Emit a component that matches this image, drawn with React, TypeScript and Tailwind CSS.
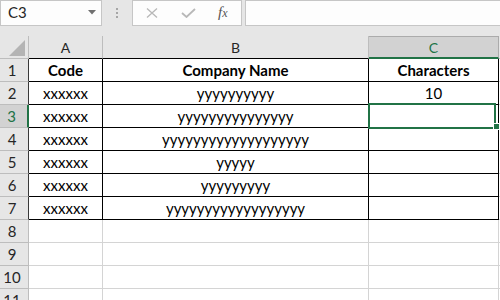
import React from "react";

const GREEN = "#217346";

type Row = { n: number; a?: string; b?: string; c?: string; bold?: boolean };

const rows: Row[] = [
  { n: 1, a: "Code", b: "Company Name", c: "Characters", bold: true },
  { n: 2, a: "xxxxxx", b: "yyyyyyyyyy", c: "10" },
  { n: 3, a: "xxxxxx", b: "yyyyyyyyyyyyyyy", c: "" },
  { n: 4, a: "xxxxxx", b: "yyyyyyyyyyyyyyyyyyy", c: "" },
  { n: 5, a: "xxxxxx", b: "yyyyy", c: "" },
  { n: 6, a: "xxxxxx", b: "yyyyyyyyy", c: "" },
  { n: 7, a: "xxxxxx", b: "yyyyyyyyyyyyyyyyyy", c: "" },
  { n: 8 },
  { n: 9 },
  { n: 10 },
  { n: 11 },
];

function FormulaBar() {
  return (
    <div className="h-[36px] bg-[#e6e6e6] flex items-start text-[#262626]">
      <div className="w-[102px] h-[26px] bg-[#fdfdfd] border border-[#c6c6c6] flex items-center justify-between pl-[7px] pr-[5px]">
        <span className="text-[15px] leading-[18px] pb-[2px]">C3</span>
        <svg width="8" height="5" viewBox="0 0 8 5" className="mb-[1px]">
          <polygon points="0,0 8,0 4,4.5" fill="#707070" />
        </svg>
      </div>
      <div className="w-[30px] h-[26px] flex flex-col items-center justify-center gap-[2px] pb-[1px]">
        <div className="w-[2px] h-[2px] bg-[#a6a6a6]" />
        <div className="w-[2px] h-[2px] bg-[#a6a6a6]" />
        <div className="w-[2px] h-[2px] bg-[#a6a6a6]" />
      </div>
      <div className="w-[110px] h-[26px] bg-[#fdfdfd] border border-[#c6c6c6] flex items-center">
        <svg width="12" height="10" viewBox="0 0 12 10" className="ml-[13px]">
          <path d="M1 0.5 L11 9.5 M11 0.5 L1 9.5" stroke="#b8b8b8" strokeWidth="1.3" fill="none" />
        </svg>
        <svg width="15" height="10" viewBox="0 0 15 10" className="ml-[23px]">
          <path d="M1 5 L5.5 9 L14 1" stroke="#b8b8b8" strokeWidth="1.8" fill="none" />
        </svg>
        <span className="ml-[22px] font-['Liberation_Serif'] italic text-[15px] leading-[18px] text-[#555] pb-[2px]">
          f<span className="text-[12px]">x</span>
        </span>
      </div>
      <div className="w-[3px]" />
      <div className="flex-1 h-[26px] bg-[#fdfdfd] border border-[#c6c6c6] border-r-0" />
    </div>
  );
}

function HeaderRow() {
  return (
    <div className="flex h-[23px] bg-[#e6e6e6] text-[14px] leading-[17px] text-[#262626]">
      <div className="w-[29px] shrink-0 border-r border-b border-[#bdbdbd] flex items-end justify-end pr-[3px] pb-[2px]">
        <svg width="16" height="16" viewBox="0 0 16 16">
          <polygon points="16,0 16,16 0,16" fill="#b4b4b4" />
        </svg>
      </div>
      <div className="w-[74px] shrink-0 border-r border-[#bdbdbd] border-b border-b-black flex items-end justify-center pb-[2px]">
        A
      </div>
      <div className="w-[266px] shrink-0 border-r border-[#bdbdbd] border-b border-b-black flex items-end justify-center pb-[2px]">
        B
      </div>
      <div className="w-[130px] shrink-0 bg-[#d2d2d2] border-t border-r border-[#ababab] border-b-2 border-b-[#217346] flex items-end justify-center pb-[1px] text-[#217346]">
        C
      </div>
      <div className="flex-1 border-b border-[#bdbdbd]" />
    </div>
  );
}

function DataRow({ r }: { r: Row }) {
  const inTable = r.n <= 7;
  const sel = r.n === 3;
  const cellBorder = inTable ? "border-black" : "border-[#d4d4d4]";
  const txt = r.bold ? "font-bold" : "";
  return (
    <div className="flex h-[23px] text-[15px] leading-[18px]">
      <div
        className={
          "w-[29px] shrink-0 border-b border-b-[#bdbdbd] flex items-end justify-center pr-[4px] pb-[2px] " +
          (sel
            ? "bg-[#d2d2d2] border-r-2 border-r-[#217346] text-[#217346]"
            : inTable
            ? "bg-[#e6e6e6] border-r border-r-[#3a3a3a] text-[#262626]"
            : "bg-[#e6e6e6] border-r border-r-[#bdbdbd] text-[#262626]")
        }
      >
        {r.n}
      </div>
      <div className={"w-[74px] shrink-0 border-r border-b bg-white text-black flex items-end justify-center pb-[2px] " + cellBorder + " " + txt}>
        {r.a}
      </div>
      <div className={"w-[266px] shrink-0 border-r border-b bg-white text-black flex items-end justify-center pb-[2px] " + cellBorder + " " + txt}>
        {r.b}
      </div>
      <div className={"w-[130px] shrink-0 border-r border-b bg-white text-black flex items-end justify-center pb-[2px] " + cellBorder + " " + txt}>
        {r.c}
      </div>
      <div className="flex-1 border-b border-[#d4d4d4] bg-white" />
    </div>
  );
}

export default function App() {
  return (
    <div className="relative w-[500px] h-[300px] overflow-hidden bg-white font-['Lato',sans-serif]">
      <FormulaBar />
      <HeaderRow />
      {rows.map((r) => (
        <DataRow key={r.n} r={r} />
      ))}
      {/* selection rectangle on C3 */}
      <div
        className="absolute left-[368px] top-[103px] w-[128px] h-[26px] border-2"
        style={{ borderColor: GREEN }}
      />
      <div className="absolute left-[493px] top-[123px] w-[7px] h-[7px] bg-[#217346] border border-white" />
    </div>
  );
}
